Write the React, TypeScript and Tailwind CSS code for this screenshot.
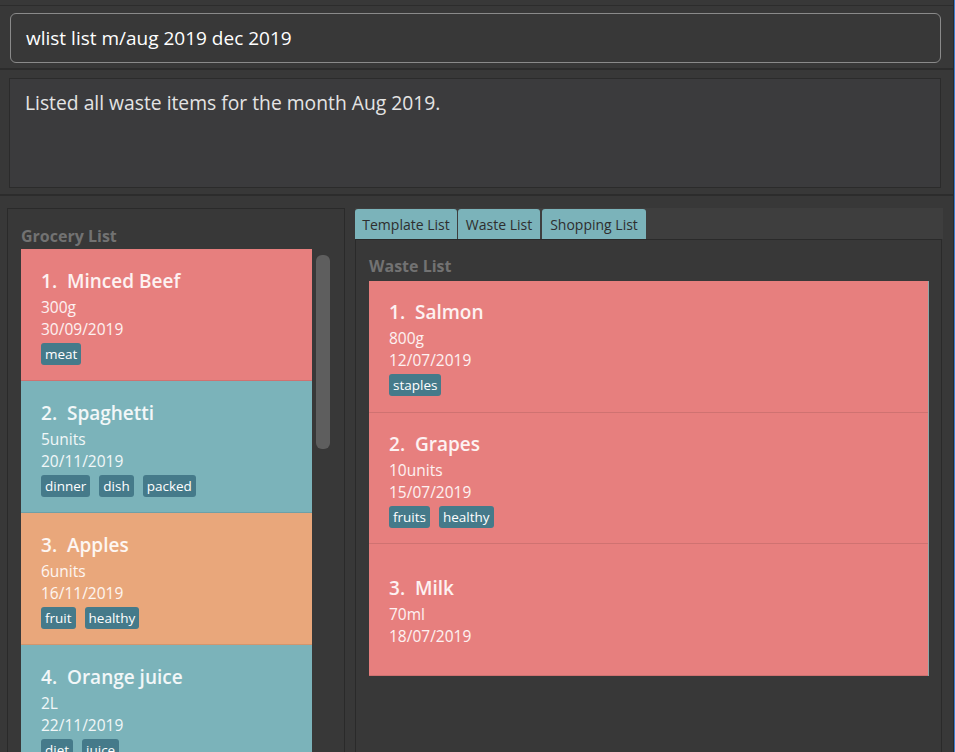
import React from "react";

type Item = { name: string; qty: string; date: string; tags: string[]; color: string };

const grocery: Item[] = [
  { name: "Minced Beef", qty: "300g", date: "30/09/2019", tags: ["meat"], color: "bg-[#e77f7e]" },
  { name: "Spaghetti", qty: "5units", date: "20/11/2019", tags: ["dinner", "dish", "packed"], color: "bg-[#7bb3ba]" },
  { name: "Apples", qty: "6units", date: "16/11/2019", tags: ["fruit", "healthy"], color: "bg-[#e9a77b]" },
  { name: "Orange juice", qty: "2L", date: "22/11/2019", tags: ["diet", "juice"], color: "bg-[#7bb3ba]" },
];

const waste: Item[] = [
  { name: "Salmon", qty: "800g", date: "12/07/2019", tags: ["staples"], color: "bg-[#e77f7e]" },
  { name: "Grapes", qty: "10units", date: "15/07/2019", tags: ["fruits", "healthy"], color: "bg-[#e77f7e]" },
  { name: "Milk", qty: "70ml", date: "18/07/2019", tags: [], color: "bg-[#e77f7e]" },
];

function Card({ item, idx, h }: { item: Item; idx: number; h: string }) {
  return (
    <div className={`${item.color} ${h} shrink-0 flex flex-col justify-center pl-[20px] pt-[4px] border-b border-black/10 text-white/90`}>
      <div className="text-[19px] leading-[24px] font-semibold">
        {idx + 1}.&nbsp;&nbsp;{item.name}
      </div>
      <div className="text-[15.5px] leading-[22px] mt-[3px]">{item.qty}</div>
      <div className="text-[15.5px] leading-[22px]">{item.date}</div>
      {item.tags.length > 0 && (
        <div className="flex gap-[9px] mt-[3px]">
          {item.tags.map((t) => (
            <span key={t} className="bg-[#457a8a] text-white text-[13.5px] leading-[22px] px-[4px] rounded-[3px]">
              {t}
            </span>
          ))}
        </div>
      )}
    </div>
  );
}

export default function App() {
  return (
    <div
      className="w-[955px] h-[752px] bg-[#383838] flex overflow-hidden"
      style={{ fontFamily: '"Open Sans", "Noto Sans", sans-serif' }}
    >
      <div className="w-[953px] flex flex-col">
        <div className="h-[5px] shrink-0" />
        <div className="h-px bg-[#2c2c2c] shrink-0" />
        {/* command box */}
        <div className="pt-[7px] pb-[5px] pl-[10px] pr-[12px] shrink-0">
          <div className="h-[50px] rounded-[6px] border border-[#8a8a8a] flex items-center pl-[15px] text-[19px] text-white">
            wlist list m/aug 2019 dec 2019
          </div>
        </div>
        <div className="h-[2px] bg-[#2c2c2c] shrink-0" />
        {/* result box */}
        <div className="pt-[8px] pb-[6px] pl-[9px] pr-[12px] shrink-0">
          <div className="h-[110px] bg-[#3b3b3d] border border-[#2b2b2b] pl-[15px] pt-[10px] text-[19.3px] text-[#e4e4e4]">
            Listed all waste items for the month Aug 2019.
          </div>
        </div>
        <div className="h-[2px] bg-[#2c2c2c] shrink-0" />
        {/* bottom */}
        <div className="flex-1 flex pt-[12px] pl-[7px] min-h-0">
          {/* left panel */}
          <div className="w-[338px] border border-[#2a2a2a] border-b-0 flex flex-col pl-[13px] pt-[17px] min-h-0">
            <div className="text-[16px] leading-[20px] font-bold text-[#727272]">Grocery List</div>
            <div className="flex mt-[3px] min-h-0 flex-1">
              <div className="w-[291px] flex flex-col overflow-hidden">
                {grocery.map((g, i) => (
                  <Card key={g.name} item={g} idx={i} h="h-[132px]" />
                ))}
              </div>
              <div className="ml-[4px] mt-[6px] w-[14px] h-[194px] rounded-[6px] bg-[#5e5e5e]" />
            </div>
          </div>
          {/* right panel */}
          <div className="ml-[10px] w-[588px] flex flex-col min-h-0">
            <div className="h-[31px] bg-[#3e3e3e] flex items-end gap-[1px] shrink-0">
              <div className="h-[30px] w-[102px] bg-[#7bb3ba] rounded-t-[3px] flex items-center justify-center text-[14px] text-[#2e2e2e]">
                Template List
              </div>
              <div className="h-[30px] w-[82px] bg-[#7bb3ba] rounded-t-[3px] flex items-center justify-center text-[14px] text-[#2e2e2e]">
                Waste List
              </div>
              <div className="h-[30px] w-[104px] bg-[#7bb3ba] rounded-t-[3px] flex items-center justify-center text-[14px] text-[#2e2e2e] ml-[1px]">
                Shopping List
              </div>
            </div>
            <div className="flex-1 w-[587px] border border-[#2a2a2a] border-b-0 pl-[13px] pt-[16px] flex flex-col">
              <div className="text-[16px] leading-[20px] font-bold text-[#727272]">Waste List</div>
              <div className="w-[560px] flex flex-col border-r border-[#8fa6a8] mt-[5px]">
                {waste.map((g, i) => (
                  <Card key={g.name} item={g} idx={i} h="h-[131.5px]" />
                ))}
              </div>
            </div>
          </div>
        </div>
      </div>
      <div className="w-px bg-[#2a2a2a]" />
      <div className="w-px bg-[#3d7fd0]" />
    </div>
  );
}
